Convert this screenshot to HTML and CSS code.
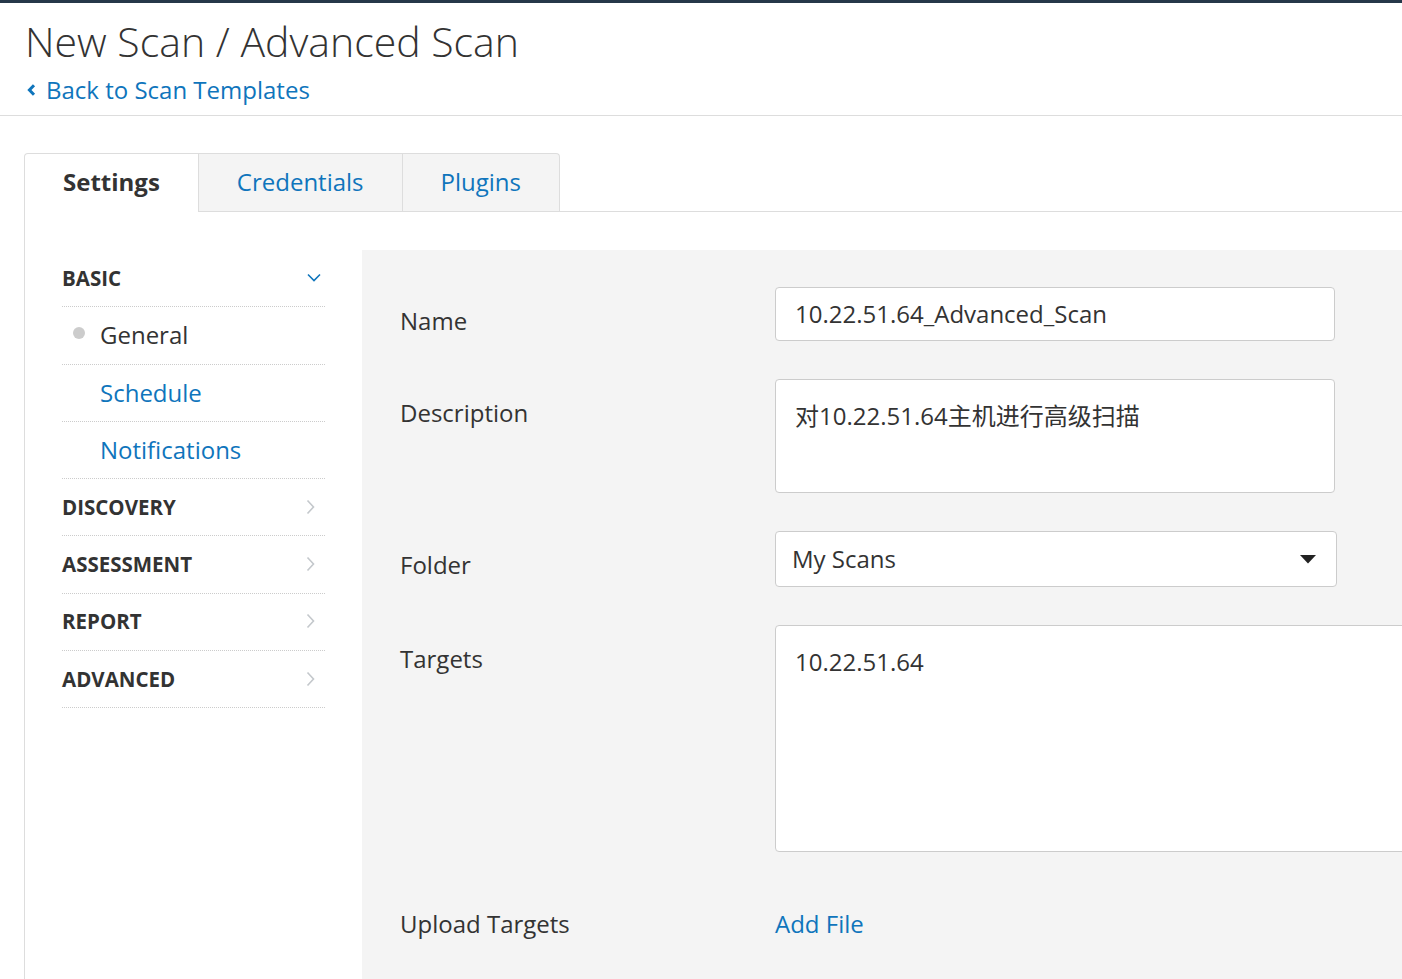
FILE: index.html
```html
<!DOCTYPE html>
<html>
<head>
<meta charset="utf-8">
<link rel="stylesheet" href="styles.css">
</head>
<body>
<div class="topbar"></div>
<header class="page-head">
  <h1 class="title">New Scan / Advanced Scan</h1>
  <a class="back" href="#"><svg class="back-ico" width="9" height="12" viewBox="0 0 9 12"><path d="M7 1.2 L2.4 6 L7 10.8" fill="none" stroke="#0f75bc" stroke-width="3"/></svg>Back to Scan Templates</a>
</header>
<main class="main">
  <nav class="tabs">
    <div class="tab active">Settings</div>
    <div class="tab">Credentials</div>
    <div class="tab last">Plugins</div>
  </nav>
  <section class="panel">
    <aside class="side">
      <div class="side-row head"><span>BASIC</span><svg class="chev" width="14" height="9" viewBox="0 0 14 9"><path d="M1 1.5 L7 7.5 L13 1.5" fill="none" stroke="#0f75bc" stroke-width="1.6"/></svg></div>
      <div class="side-row item current"><span class="dot"></span><span>General</span></div>
      <div class="side-row item"><a href="#">Schedule</a></div>
      <div class="side-row item"><a href="#">Notifications</a></div>
      <div class="side-row head"><span>DISCOVERY</span><svg class="chev-r" width="9" height="16" viewBox="0 0 9 16"><path d="M1.5 1.5 L7.5 8 L1.5 14.5" fill="none" stroke="#c4c8cc" stroke-width="1.6"/></svg></div>
      <div class="side-row head"><span>ASSESSMENT</span><svg class="chev-r" width="9" height="16" viewBox="0 0 9 16"><path d="M1.5 1.5 L7.5 8 L1.5 14.5" fill="none" stroke="#c4c8cc" stroke-width="1.6"/></svg></div>
      <div class="side-row head"><span>REPORT</span><svg class="chev-r" width="9" height="16" viewBox="0 0 9 16"><path d="M1.5 1.5 L7.5 8 L1.5 14.5" fill="none" stroke="#c4c8cc" stroke-width="1.6"/></svg></div>
      <div class="side-row head"><span>ADVANCED</span><svg class="chev-r" width="9" height="16" viewBox="0 0 9 16"><path d="M1.5 1.5 L7.5 8 L1.5 14.5" fill="none" stroke="#c4c8cc" stroke-width="1.6"/></svg></div>
    </aside>
    <div class="content">
      <div class="form-row">
        <label class="lbl">Name</label>
        <div class="field input">10.22.51.64_Advanced_Scan</div>
      </div>
      <div class="form-row">
        <label class="lbl">Description</label>
        <div class="field textarea desc">对10.22.51.64主机进行高级扫描</div>
      </div>
      <div class="form-row">
        <label class="lbl">Folder</label>
        <div class="field select"><span>My Scans</span><svg width="16" height="9" viewBox="0 0 16 9"><path d="M0 0 H16 L8 8.5 Z" fill="#222"/></svg></div>
      </div>
      <div class="form-row">
        <label class="lbl">Targets</label>
        <div class="field textarea targets">10.22.51.64</div>
      </div>
      <div class="form-row">
        <label class="lbl">Upload Targets</label>
        <a class="addfile" href="#">Add File</a>
      </div>
    </div>
  </section>
</main>
</body>
</html>
```

FILE: styles.css
```css
* { box-sizing: border-box; }
html, body { margin: 0; padding: 0; }
body {
  font-family: "Open Sans", "Noto Sans CJK SC", sans-serif;
  color: #333;
  background: #fff;
  width: 1402px;
  height: 979px;
  overflow: hidden;
}
a { color: #0f75bc; text-decoration: none; }
.topbar { height: 3px; background: #263849; }
.page-head {
  padding: 10px 25px 10px;
  border-bottom: 1px solid #ddd;
  height: 113px;
}
.title {
  margin: 0;
  font-weight: 300;
  font-size: 41px;
  line-height: 56px;
  color: #333;
}
.back {
  display: inline-flex;
  align-items: center;
  font-size: 24px;
  line-height: 30px;
  margin-top: 6px;
}
.back-ico { margin: 0 10px 0 2px; }
.main { padding-top: 37px; }
.tabs {
  display: flex;
  margin-left: 24px;
  height: 59px;
  border-bottom: 1px solid #ddd;
}
.tab {
  padding: 0 38px;
  font-size: 24px;
  line-height: 56px;
  background: #f4f4f4;
  color: #0f75bc;
  border-top: 1px solid #ddd;
  border-right: 1px solid #ddd;
}
.tab.active {
  background: #fff;
  color: #333;
  font-weight: 700;
  border-left: 1px solid #ddd;
  border-top-left-radius: 4px;
  height: 59px;
  margin-bottom: -1px;
}
.tab.last { border-top-right-radius: 4px; }
.panel {
  display: flex;
  margin-left: 24px;
  border-left: 1px solid #ddd;
  padding: 38px 0 0 37px;
  height: 800px;
}
.side {
  width: 263px;
  flex: none;
  margin-right: 37px;
}
.side-row {
  display: flex;
  align-items: center;
  justify-content: space-between;
  height: 57.3px;
  padding-bottom: 1px;
  border-bottom: 1px dotted #ccc;
}
.head {
  font-weight: 700;
  font-size: 20.5px;
  color: #333;
  padding-right: 4px;
}
.chev-r { margin-right: 6px; }
.item {
  justify-content: flex-start;
  padding-left: 38px;
  font-size: 24px;
  position: relative;
}
.dot {
  position: absolute;
  left: 11px;
  top: 20px;
  width: 12px;
  height: 12px;
  border-radius: 50%;
  background: #ccc;
}
.content {
  flex: 1;
  background: #f4f4f4;
  padding: 37px 0 0 38px;
}
.form-row {
  display: flex;
  margin-bottom: 38px;
}
.lbl {
  width: 375px;
  flex: none;
  font-size: 24px;
  line-height: 30px;
  padding-top: 19px;
  color: #333;
}
.field {
  background: #fff;
  border: 1px solid #ccc;
  border-radius: 4px;
  font-size: 24px;
  line-height: 30px;
  color: #333;
}
.input {
  width: 560px;
  height: 54px;
  padding: 11px 19px;
}
.textarea { padding: 21px 19px; }
.desc { width: 560px; height: 114px; }
.select {
  width: 562px;
  height: 56px;
  padding: 11px 20px 11px 16px;
  display: flex;
  align-items: center;
  justify-content: space-between;
}
.targets { width: 720px; height: 227px; }
.addfile {
  font-size: 24px;
  line-height: 30px;
  padding-top: 19px;
}
```
